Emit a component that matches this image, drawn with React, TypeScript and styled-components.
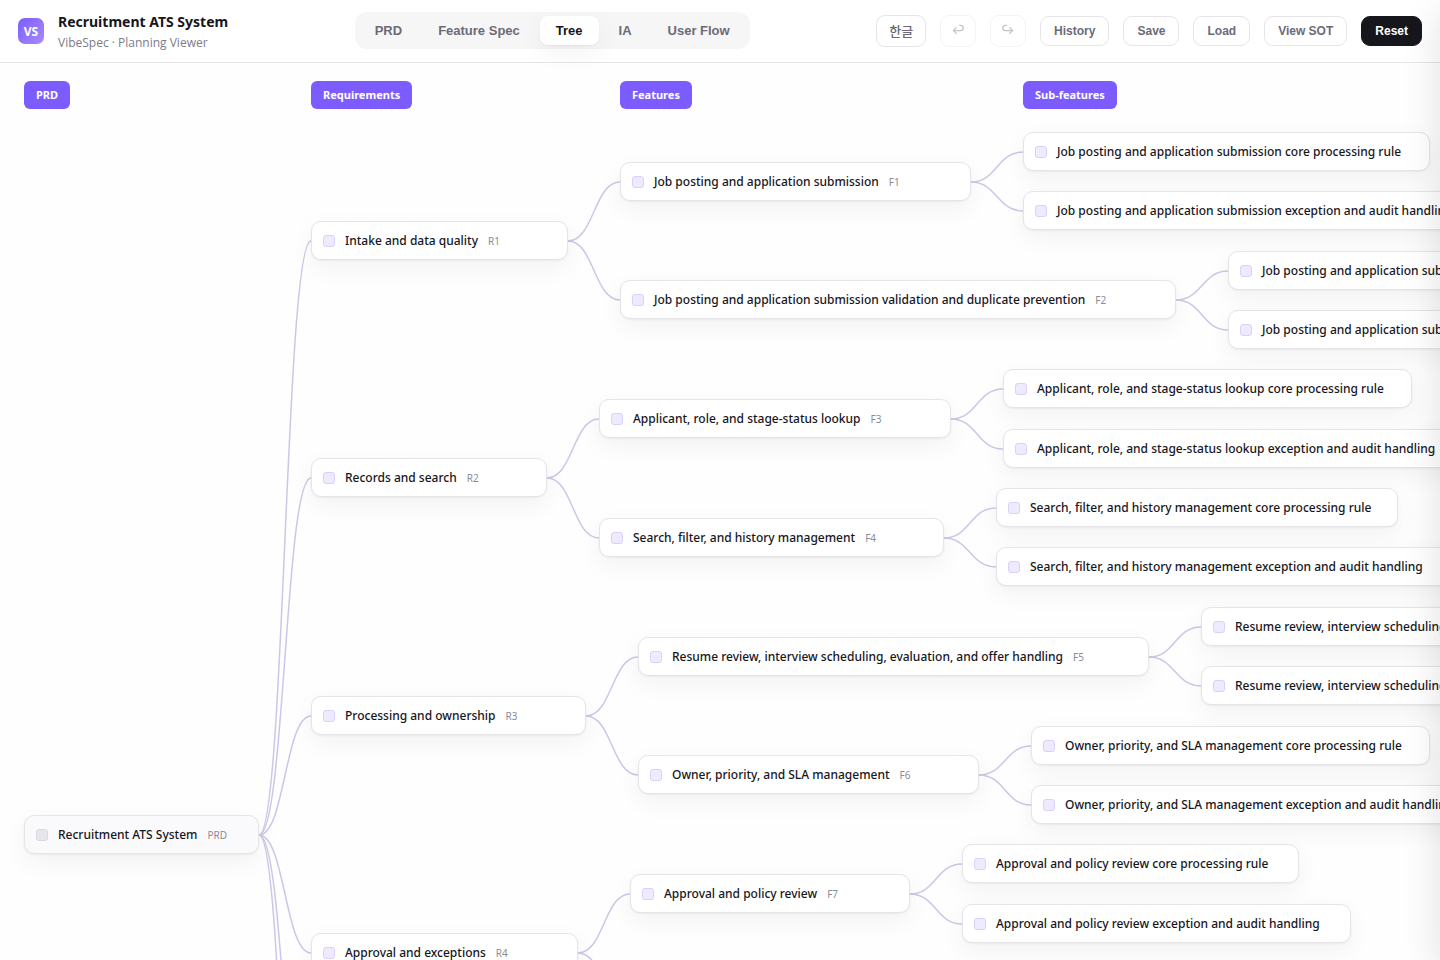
import React from "react";
import styled, { createGlobalStyle } from "styled-components";

const UI = `"Noto Sans", "Noto Sans CJK KR", sans-serif`;
const CONTROL = `"Liberation Sans", "Noto Sans CJK KR", Arial, sans-serif`;

const GlobalStyle = createGlobalStyle`
  *, *::before, *::after { box-sizing: border-box; }
  body { margin: 0; background: #fefefe; color: #16161d; font-family: ${UI}; }
`;

const Shell = styled.div`
  display: flex;
  flex-direction: column;
  height: 100vh;
  overflow: hidden;
`;

const Topbar = styled.header`
  display: flex;
  align-items: center;
  justify-content: space-between;
  padding: 10px 18px;
  border-bottom: 1px solid #e5e5e8;
  background: #fff;
`;

const Brand = styled.div`
  display: flex;
  align-items: center;
  gap: 14px;
`;

const Logo = styled.div`
  display: grid;
  place-items: center;
  width: 26px;
  height: 26px;
  border-radius: 7px;
  background: linear-gradient(135deg, #7c5cff, #a78bfa);
  color: #fff;
  font-size: 12px;
  font-weight: 700;
`;

const Title = styled.h1`
  margin: 0;
  font-size: 14px;
  line-height: 24px;
  font-weight: 700;
`;

const Subtitle = styled.p`
  margin: 0;
  font-family: "Open Sans", sans-serif;
  font-size: 12px;
  line-height: 18px;
  color: #7c7c88;
`;

const Tabs = styled.nav`
  display: flex;
  gap: 4px;
  margin-bottom: 1px;
  padding: 4px;
  border-radius: 12px;
  background: #f6f6f7;
`;

const Tab = styled.button<{ $active?: boolean }>`
  height: 29px;
  padding: 0 16px;
  border: 0;
  border-radius: 8px;
  background: ${(p) => (p.$active ? "#fff" : "transparent")};
  box-shadow: ${(p) => (p.$active ? "0 1px 2px rgba(0,0,0,.05), 0 8px 24px rgba(0,0,0,.05)" : "none")};
  color: ${(p) => (p.$active ? "#16161d" : "#6b6b78")};
  font: 700 13px ${CONTROL};
`;

const Actions = styled.div`
  display: flex;
  align-items: center;
  gap: 14px;
`;

const Action = styled.button<{ $primary?: boolean }>`
  height: 30px;
  padding: 0 13px;
  border: 1px solid ${(p) => (p.$primary ? "#16161d" : "#e5e5e8")};
  border-radius: 9px;
  background: ${(p) => (p.$primary ? "#16161d" : "#fff")};
  color: ${(p) => (p.$primary ? "#fff" : "#6b6b78")};
  font: 700 12px ${CONTROL};
`;

const GlyphAction = styled(Action)`
  display: flex;
  align-items: center;
  height: 32px;
  padding: 0 12px 2px;
  font-size: 13px;
  font-weight: 500;
  &:disabled { opacity: 0.4; }
`;

const Board = styled.main`
  flex: 1;
  min-height: 0;
  padding: 18px 24px;
  overflow: hidden;
  position: relative;
`;

const Lanes = styled.div`
  display: grid;
  grid-template-columns: 287px 309px 403px 1fr;
  justify-items: start;
`;

const Lane = styled.h2`
  margin: 0;
  padding: 0 12px;
  border-radius: 6px;
  background: #7c5cff;
  color: #fff;
  font-size: 11px;
  line-height: 28px;
  font-weight: 700;
  white-space: nowrap;
`;

const Wires = styled.svg`
  position: absolute;
  inset: 0;
  width: 100%;
  height: 100%;
  fill: none;
  stroke: #cdc6e8;
  stroke-width: 1.5;
`;

const Card = styled.div<{ $root?: boolean }>`
  position: absolute;
  display: flex;
  align-items: center;
  gap: 10px;
  height: 39px;
  padding: 0 11px;
  border: 1px solid #e5e5e8;
  border-radius: 10px;
  background: ${(p) => (p.$root ? "#fafafc" : "#fff")};
  box-shadow: 0 1px 2px rgba(0, 0, 0, 0.05), 0 8px 24px rgba(0, 0, 0, 0.05);
  white-space: nowrap;
`;

const Swatch = styled.i<{ $root?: boolean }>`
  flex: none;
  width: 12px;
  height: 12px;
  border: 1px solid ${(p) => (p.$root ? "#d9d9e0" : "#d9d0fc")};
  border-radius: 3px;
  background: ${(p) => (p.$root ? "#e5e5eb" : "#efeaff")};
`;

const Label = styled.span`
  font-size: 12px;
  font-weight: 500;
`;

const Code = styled.span`
  font-size: 10px;
  color: #8b8b98;
`;

const DrawerEdge = styled.aside`
  position: fixed;
  top: 0;
  bottom: 0;
  left: 100%;
  width: 420px;
  box-shadow: 0 12px 36px rgba(0, 0, 0, 0.12);
`;

type TreeNode = { x: number; y: number; w: number; label: string; code?: string; children?: TreeNode[] };

/* x and y are the left edge and the vertical centre of a card on the canvas */
const tree: TreeNode = {
  x: 24, y: 772, w: 235, label: "Recruitment ATS System", code: "PRD",
  children: [
    { x: 311, y: 178, w: 257, label: "Intake and data quality", code: "R1", children: [
      { x: 620, y: 119, w: 351, label: "Job posting and application submission", code: "F1", children: [
        { x: 1023, y: 89, w: 407, label: "Job posting and application submission core processing rule" },
        { x: 1023, y: 148, w: 460, label: "Job posting and application submission exception and audit handling" },
      ] },
      { x: 620, y: 237, w: 556, label: "Job posting and application submission validation and duplicate prevention", code: "F2", children: [
        { x: 1228, y: 208, w: 610, label: "Job posting and application submission validation and duplicate prevention core processing rule" },
        { x: 1228, y: 267, w: 660, label: "Job posting and application submission validation and duplicate prevention exception and audit handling" },
      ] },
    ] },
    { x: 311, y: 415, w: 236, label: "Records and search", code: "R2", children: [
      { x: 599, y: 356, w: 352, label: "Applicant, role, and stage-status lookup", code: "F3", children: [
        { x: 1003, y: 326, w: 409, label: "Applicant, role, and stage-status lookup core processing rule" },
        { x: 1003, y: 386, w: 462, label: "Applicant, role, and stage-status lookup exception and audit handling" },
      ] },
      { x: 599, y: 475, w: 345, label: "Search, filter, and history management", code: "F4", children: [
        { x: 996, y: 445, w: 402, label: "Search, filter, and history management core processing rule" },
        { x: 996, y: 504, w: 455, label: "Search, filter, and history management exception and audit handling" },
      ] },
    ] },
    { x: 311, y: 653, w: 275, label: "Processing and ownership", code: "R3", children: [
      { x: 638, y: 594, w: 511, label: "Resume review, interview scheduling, evaluation, and offer handling", code: "F5", children: [
        { x: 1201, y: 564, w: 560, label: "Resume review, interview scheduling, evaluation, and offer handling core processing rule" },
        { x: 1201, y: 623, w: 620, label: "Resume review, interview scheduling, evaluation, and offer handling exception and audit handling" },
      ] },
      { x: 638, y: 712, w: 341, label: "Owner, priority, and SLA management", code: "F6", children: [
        { x: 1031, y: 683, w: 399, label: "Owner, priority, and SLA management core processing rule" },
        { x: 1031, y: 742, w: 452, label: "Owner, priority, and SLA management exception and audit handling" },
      ] },
    ] },
    { x: 311, y: 890, w: 267, label: "Approval and exceptions", code: "R4", children: [
      { x: 630, y: 831, w: 280, label: "Approval and policy review", code: "F7", children: [
        { x: 962, y: 801, w: 337, label: "Approval and policy review core processing rule" },
        { x: 962, y: 861, w: 389, label: "Approval and policy review exception and audit handling" },
      ] },
    ] },
  ],
};

/* Branches that run on past the bottom of the canvas */
const openBranches = [
  { from: { x: 259, y: 772 }, to: { x: 311, y: 1127 } },
  { from: { x: 259, y: 772 }, to: { x: 311, y: 1364 } },
  { from: { x: 578, y: 890 }, to: { x: 630, y: 949 } },
];

const flatten = (n: TreeNode): TreeNode[] => [n, ...(n.children ?? []).flatMap(flatten)];
const nodes = flatten(tree);

const curve = (x1: number, y1: number, x2: number, y2: number) => {
  const mid = (x1 + x2) / 2;
  return `M${x1} ${y1}C${mid} ${y1} ${mid} ${y2} ${x2} ${y2}`;
};

const wires = [
  ...nodes.flatMap((n) => (n.children ?? []).map((c) => curve(n.x + n.w, n.y, c.x, c.y))),
  ...openBranches.map((b) => curve(b.from.x, b.from.y, b.to.x, b.to.y)),
];

const UndoIcon = ({ flip }: { flip?: boolean }) => (
  <svg width="10" height="14" viewBox="0 0 10 14" overflow="visible" fill="none" stroke="currentColor" strokeWidth="1.2" aria-hidden="true">
    <g transform={flip ? "matrix(-1 0 0 1 10 0)" : undefined}>
      <path d="M3.6 4.4L.4 7.6l3.2 3.1M.4 7.6h7.2a2.6 2.6 0 0 0 0-5.2H6.2" />
    </g>
  </svg>
);

const tabs = ["PRD", "Feature Spec", "Tree", "IA", "User Flow"];
const lanes = ["PRD", "Requirements", "Features", "Sub-features"];

export default function App() {
  return (
    <Shell>
      <GlobalStyle />
      <Topbar>
        <Brand>
          <Logo>VS</Logo>
          <div>
            <Title>Recruitment ATS System</Title>
            <Subtitle>VibeSpec · Planning Viewer</Subtitle>
          </div>
        </Brand>
        <Tabs>
          {tabs.map((t) => (
            <Tab key={t} $active={t === "Tree"}>{t}</Tab>
          ))}
        </Tabs>
        <Actions>
          <GlyphAction>한글</GlyphAction>
          <GlyphAction disabled aria-label="Undo"><UndoIcon /></GlyphAction>
          <GlyphAction disabled aria-label="Redo"><UndoIcon flip /></GlyphAction>
          <Action>History</Action>
          <Action>Save</Action>
          <Action>Load</Action>
          <Action>View SOT</Action>
          <Action $primary>Reset</Action>
        </Actions>
      </Topbar>
      <Board>
        <Lanes>
          {lanes.map((l) => <Lane key={l}>{l}</Lane>)}
        </Lanes>
        <Wires>
          {wires.map((d) => <path key={d} d={d} />)}
        </Wires>
        {nodes.map((n) => (
          <Card key={n.label} $root={n === tree} style={{ left: n.x, top: n.y - 20, width: n.w }}>
            <Swatch $root={n === tree} />
            <Label>{n.label}</Label>
            {n.code && <Code>{n.code}</Code>}
          </Card>
        ))}
      </Board>
      <DrawerEdge />
    </Shell>
  );
}
